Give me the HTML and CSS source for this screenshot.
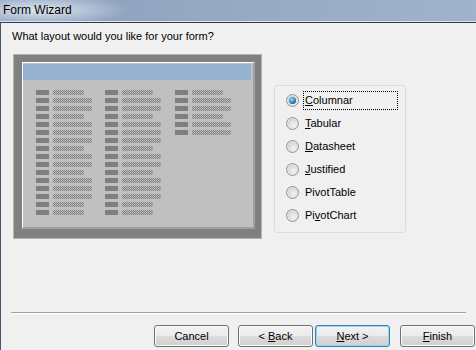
FILE: index.html
```html
<!DOCTYPE html>
<html>
<head>
  <title>Form Wizard</title>
  <link rel="stylesheet" href="styles.css">
</head>
<body>
<div class="window">
  <div class="titlebar">Form Wizard</div>
  <div class="client">
    <p class="prompt">What layout would you like for your form?</p>
    <div class="main">
      <div class="preview">
        <div class="sheet">
          <div class="header"></div>
          <div class="cols">
            <div class="col">
              <div class="field"><span class="box"></span><span class="bar short"></span></div>
              <div class="field"><span class="box"></span><span class="bar"></span></div>
              <div class="field"><span class="box"></span><span class="bar"></span></div>
              <div class="field"><span class="box"></span><span class="bar short"></span></div>
              <div class="field"><span class="box"></span><span class="bar"></span></div>
              <div class="field"><span class="box"></span><span class="bar"></span></div>
              <div class="field"><span class="box"></span><span class="bar"></span></div>
              <div class="field"><span class="box"></span><span class="bar short"></span></div>
              <div class="field"><span class="box"></span><span class="bar"></span></div>
              <div class="field"><span class="box"></span><span class="bar"></span></div>
              <div class="field"><span class="box"></span><span class="bar short"></span></div>
              <div class="field"><span class="box"></span><span class="bar"></span></div>
              <div class="field"><span class="box"></span><span class="bar"></span></div>
              <div class="field"><span class="box"></span><span class="bar"></span></div>
              <div class="field"><span class="box"></span><span class="bar short"></span></div>
              <div class="field"><span class="box"></span><span class="bar short"></span></div>
            </div>
            <div class="col">
              <div class="field"><span class="box"></span><span class="bar short"></span></div>
              <div class="field"><span class="box"></span><span class="bar"></span></div>
              <div class="field"><span class="box"></span><span class="bar"></span></div>
              <div class="field"><span class="box"></span><span class="bar short"></span></div>
              <div class="field"><span class="box"></span><span class="bar"></span></div>
              <div class="field"><span class="box"></span><span class="bar"></span></div>
              <div class="field"><span class="box"></span><span class="bar"></span></div>
              <div class="field"><span class="box"></span><span class="bar short"></span></div>
              <div class="field"><span class="box"></span><span class="bar"></span></div>
              <div class="field"><span class="box"></span><span class="bar"></span></div>
              <div class="field"><span class="box"></span><span class="bar short"></span></div>
              <div class="field"><span class="box"></span><span class="bar"></span></div>
              <div class="field"><span class="box"></span><span class="bar"></span></div>
              <div class="field"><span class="box"></span><span class="bar"></span></div>
              <div class="field"><span class="box"></span><span class="bar short"></span></div>
              <div class="field"><span class="box"></span><span class="bar short"></span></div>
            </div>
            <div class="col">
              <div class="field"><span class="box"></span><span class="bar short"></span></div>
              <div class="field"><span class="box"></span><span class="bar"></span></div>
              <div class="field"><span class="box"></span><span class="bar"></span></div>
              <div class="field"><span class="box"></span><span class="bar short"></span></div>
              <div class="field"><span class="box"></span><span class="bar"></span></div>
              <div class="field"><span class="box"></span><span class="bar"></span></div>
            </div>
          </div>
        </div>
      </div>
      <div class="options">
        <label class="option"><input type="radio" name="layout" checked><span class="text focus"><u>C</u>olumnar</span></label>
        <label class="option"><input type="radio" name="layout"><span class="text"><u>T</u>abular</span></label>
        <label class="option"><input type="radio" name="layout"><span class="text"><u>D</u>atasheet</span></label>
        <label class="option"><input type="radio" name="layout"><span class="text"><u>J</u>ustified</span></label>
        <label class="option"><input type="radio" name="layout"><span class="text">PivotTable</span></label>
        <label class="option"><input type="radio" name="layout"><span class="text">Pi<u>v</u>otChart</span></label>
      </div>
    </div>
    <div class="separator"></div>
    <div class="buttons">
      <button class="btn cancel">Cancel</button>
      <button class="btn back">&lt; <u>B</u>ack</button>
      <button class="btn next default"><u>N</u>ext &gt;</button>
      <button class="btn finish"><u>F</u>inish</button>
    </div>
  </div>
</div>
</body>
</html>
```

FILE: styles.css
```css
html, body {
  margin: 0;
  padding: 0;
}

body {
  width: 476px;
  height: 350px;
  overflow: hidden;
  background: #f0f0f0;
  font-family: "Liberation Sans", Arial, sans-serif;
  font-size: 11px;
  color: #000;
}

.titlebar {
  height: 21px;
  line-height: 20px;
  padding-left: 3px;
  font-size: 12px;
  border-bottom: 1px solid #dce4ee;
  background:
    radial-gradient(ellipse 90px 16px at 38px 10px, rgba(226, 233, 242, 0.95), rgba(226, 233, 242, 0) 100%),
    linear-gradient(to right, #8a9fbd, #94a8c2 40%, #a1b3ca);
}

.client {
  height: 327px;
  border-top: 1px solid #2f3d52;
  border-left: 1px solid #46566c;
  padding-top: 6px;
}

.prompt {
  margin: 0 0 11px 11px;
  line-height: 14px;
}

.main {
  display: flex;
  align-items: flex-start;
}

/* preview picture of the chosen layout */
.preview {
  width: 233px;
  height: 167px;
  margin-left: 12px;
  padding: 7px 6px 9px 8px;
  background: #808080;
  border: 1px solid #b4b4b4;
}

.sheet {
  height: 164px;
  background: #c0c0c0;
  border-top: 1px solid #fff;
  border-left: 1px solid #fff;
  border-right: 2px solid #a0a0a0;
  border-bottom: 2px solid #a0a0a0;
}

.header {
  height: 16px;
  margin: 1px 2px 0 0;
  background: #97b2d1;
}

.cols {
  display: flex;
  padding: 10px 0 0 13px;
}

.col {
  width: 69px;
  display: flex;
  flex-direction: column;
  gap: 3px;
}

.col:nth-child(2) {
  width: 70px;
}

.field {
  display: flex;
  gap: 4px;
  height: 5px;
}

.box {
  width: 13px;
  background: #808080;
}

.bar {
  width: 39px;
  background: repeating-conic-gradient(#808080 0 25%, #c0c0c0 0 50%) 0 0 / 2px 2px;
}

.bar.short {
  width: 31px;
}

/* layout choices */
.options {
  width: 130px;
  height: 141px;
  margin: 31px 0 0 12px;
  padding-top: 5px;
  border: 1px solid #d5dfe5;
  border-radius: 3px;
  display: flex;
  flex-direction: column;
  gap: 4px;
}

.option {
  display: flex;
  align-items: center;
  height: 19px;
  padding-left: 11px;
}

.option input {
  appearance: none;
  margin: 0 4px 0 0;
  width: 13px;
  height: 13px;
  border-radius: 50%;
  border: 1px solid #939393;
  background: radial-gradient(circle at 60% 65%, #f4f4f4, #d9d9d9 55%, #c4c4c4);
  box-shadow: inset 0 0 0 1px #e6e6e6;
  display: flex;
  align-items: center;
  justify-content: center;
}

.option input:checked::after {
  content: "";
  width: 7px;
  height: 7px;
  border-radius: 50%;
  background: radial-gradient(circle at 40% 35%, #a6dcfa, #3b8fce 45%, #124a7c 90%);
}

.option .text {
  width: 92px;
  height: 17px;
  line-height: 17px;
  padding-left: 1px;
  border: 1px dotted transparent;
}

.option .text.focus {
  border-color: #000;
}

.separator {
  margin: 73px 10px 0 10px;
  border-top: 1px solid #a0a0a0;
  border-bottom: 1px solid #fff;
}

.buttons {
  display: flex;
  justify-content: flex-end;
  margin-top: 11px;
  padding-right: 1px;
}

.btn {
  width: 75px;
  height: 22px;
  margin-left: 9px;
  padding: 0;
  font-family: "Liberation Sans", Arial, sans-serif;
  font-size: 11px;
  color: #000;
  border: 1px solid #707070;
  border-radius: 3px;
  background: linear-gradient(#f2f2f2, #ebebeb 50%, #dddddd 50%, #cfcfcf);
  box-shadow: inset 0 0 0 1px #fbfbfb;
}

.btn.next {
  margin-left: 2px;
  border-color: #3c7fb1;
  box-shadow: inset 0 0 0 1px #93d7f5;
}

.btn.finish {
  margin-left: 10px;
}
```
